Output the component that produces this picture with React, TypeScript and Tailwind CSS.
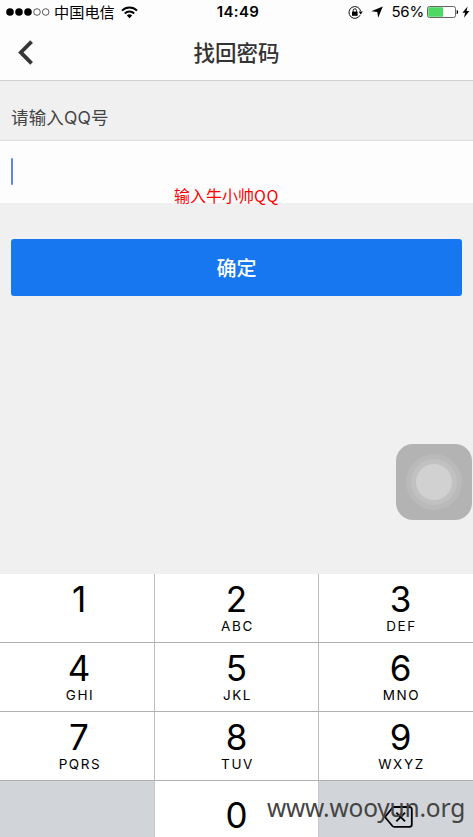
import { clsx } from 'clsx';

interface Key {
    digit: string;
    letters?: string;
}

const ROWS: Key[][] = [
    [{ digit: '1' }, { digit: '2', letters: 'ABC' }, { digit: '3', letters: 'DEF' }],
    [{ digit: '4', letters: 'GHI' }, { digit: '5', letters: 'JKL' }, { digit: '6', letters: 'MNO' }],
    [{ digit: '7', letters: 'PQRS' }, { digit: '8', letters: 'TUV' }, { digit: '9', letters: 'WXYZ' }],
];

const COLUMNS = [
    'w-[155px] pl-[4px] border-r border-[#bcbcbe]',
    'w-[164px] border-r border-[#bcbcbe]',
    'w-[154px] pl-[9px]',
];

function StatusBar() {
    return (
        <div className="h-[25px] shrink-0 flex items-center justify-between pl-[6px] pr-[3px] text-black">
            <div className="flex-1 flex items-center pb-[1px]">
                <svg width="44" height="8" viewBox="0 0 44 8">
                    <circle cx="4" cy="4" r="3.8" />
                    <circle cx="13" cy="4" r="3.8" />
                    <circle cx="22" cy="4" r="3.8" />
                    <circle cx="31" cy="4" r="3.3" fill="none" stroke="#333" strokeWidth="0.8" />
                    <circle cx="39.7" cy="4" r="3.3" fill="none" stroke="#333" strokeWidth="0.8" />
                </svg>
                <span className="ml-[4px] pb-[2px] text-[15.2px] leading-[22px]">中国电信</span>
                <svg className="ml-[6px]" width="17" height="13" viewBox="0 0 17 13" fill="none" stroke="#000" strokeWidth="2">
                    <path d="M1 4.6a10.6 10.6 0 0 1 15 0" />
                    <path d="M3.8 7.5a6.6 6.6 0 0 1 9.4 0" />
                    <path d="M8.5 12.2 5.8 9.5a3.8 3.8 0 0 1 5.4 0z" fill="#000" stroke="none" />
                </svg>
            </div>
            <span className="font-[Inter] text-[15px] font-semibold tracking-[0.4px]">14:49</span>
            <div className="flex-1 flex items-center justify-end pb-[1px]">
                <svg width="15" height="13" viewBox="0 0 15 13" fill="none" stroke="#111">
                    <path d="M12.1 9.2A5.9 5.9 0 1 1 12.6 5" strokeWidth="1" />
                    <path d="M10.6 5.6h4.2l-2.1 2.8z" fill="#000" stroke="none" />
                    <rect x="4" y="5.6" width="5.6" height="4.2" fill="#000" stroke="none" />
                    <path d="M5.2 6V4.4a1.6 1.6 0 0 1 3.2 0V6" strokeWidth="1" />
                </svg>
                <svg className="ml-[8px]" width="12" height="12" viewBox="0 0 12 12">
                    <path d="M11.8.4 7.2 11.8 6.3 6 .3 5.3z" />
                </svg>
                <span className="ml-[8px] pt-[1px] font-[Inter] text-[15px] tracking-[-0.2px]">56%</span>
                <svg className="ml-[3px]" width="32" height="12" viewBox="0 0 32 12">
                    <rect x="0.5" y="0.5" width="28" height="11" rx="2" fill="#fff" stroke="#555" strokeWidth="0.9" />
                    <rect x="1.3" y="1.3" width="14.8" height="9.4" rx="0.8" fill="#4cd863" />
                    <path d="M29.7 3.9c1.9.4 1.9 3.8 0 4.2z" />
                </svg>
                <svg className="ml-[3px]" width="8" height="12" viewBox="0 0 8 12">
                    <path d="M5.6.4.4 6.7h2.7L2 11.8l5.4-6.7H4.5z" />
                </svg>
            </div>
        </div>
    );
}

function Header() {
    return (
        <div className="h-[56px] shrink-0 flex items-center border-b border-[#d0d0d0] px-[18px]">
            <svg width="16" height="26" viewBox="0 0 16 26" fill="none" stroke="#353535" strokeWidth="3.8">
                <path d="M13.6 1.6 2.8 12.4l10.8 10.9" />
            </svg>
            <h1 className="flex-1 pr-[16px] pb-[2px] text-center text-[21.5px] font-medium leading-[30px] text-[#333]">找回密码</h1>
        </div>
    );
}

function Keypad() {
    return (
        <div className="relative h-[263px] shrink-0 overflow-hidden bg-white font-[Inter] text-black">
            {ROWS.map((row, i) => (
                <div key={i} className="h-[69px] flex border-b border-[#b0b0b2]">
                    {row.map((key, j) => (
                        <button key={key.digit} className={clsx('flex flex-col items-center pt-[8px]', COLUMNS[j])}>
                            <span className="text-[35px] leading-[35px]">{key.digit}</span>
                            {key.letters && (
                                <span className="mt-[1px] pl-[2px] text-[13.5px] leading-[16px] tracking-[1.6px]">{key.letters}</span>
                            )}
                        </button>
                    ))}
                </div>
            ))}
            <div className="h-[56px] flex">
                <div className="w-[155px] border-r border-[#c3c6cb] bg-[#d1d4d9]" />
                <button className="w-[163px] flex justify-center pt-[17px]">
                    <span className="text-[35px] leading-[35px]">0</span>
                </button>
                <button className="flex-1 flex border-l border-[#c3c6cb] bg-[#d1d4d9] pl-[65px] pt-[25px]">
                    <svg width="29" height="22" viewBox="0 0 29 22" fill="none" stroke="#000" strokeWidth="1.8">
                        <path d="M10.2 1h15.3a2.3 2.3 0 0 1 2.3 2.3v15.2a2.3 2.3 0 0 1-2.3 2.3H10.2a2.5 2.5 0 0 1-1.8-.8L1 11l7.4-9.2a2.5 2.5 0 0 1 1.8-.8z" />
                        <path d="m12.3 6.6 8.8 8.8m0-8.8-8.8 8.8" />
                    </svg>
                </button>
            </div>
            <span className="absolute right-[8px] top-[217px] font-['Noto_Sans'] text-[24.5px] leading-[34px] tracking-[-0.2px] text-[#444]">
                www.wooyun.org
            </span>
        </div>
    );
}

export default function App() {
    return (
        <div className="relative w-[473px] h-[837px] overflow-hidden flex flex-col bg-[#fdfdfd] font-['Noto_Sans_CJK_SC',sans-serif]">
            <StatusBar />
            <Header />

            <div className="flex-1 flex flex-col bg-[#f0f0f0]">
                <label className="h-[59px] shrink-0 pl-[11px] pt-[24px] font-[Inter,'Noto_Sans_CJK_SC',sans-serif] text-[17.5px] leading-[26px] tracking-[0.15px] text-[#444]">
                    请输入QQ号
                </label>
                <div className="h-[63px] shrink-0 flex items-start border-t border-[#dedede] bg-[#fdfdfd] pl-[11px] pt-[17px]">
                    <div className="w-[2px] h-[27px] rounded-full bg-[#6284f0]" />
                </div>
                <button className="mx-[11px] mt-[36px] h-[57px] shrink-0 rounded-[3px] bg-[#1677f0] pt-[1px] text-[20px] font-medium text-white">
                    确定
                </button>
            </div>

            <Keypad />

            {/* Note sits across the lower edge of the input */}
            <span className="absolute left-[174px] top-[183px] text-[16px] leading-[24px] text-[#f00]">
                输入牛小帅<span className="tracking-[0.5px]">QQ</span>
            </span>

            {/* AssistiveTouch */}
            <div className="absolute left-[396px] top-[444px] size-[76px] rounded-[17px] bg-[#b3b3b3] flex items-center justify-center">
                <div className="size-[56px] rounded-full bg-[#bababa] flex items-center justify-center">
                    <div className="size-[46px] rounded-full bg-[#c1c1c1] flex items-center justify-center">
                        <div className="size-[36px] rounded-full bg-[#d1d1d1]" />
                    </div>
                </div>
            </div>
        </div>
    );
}
